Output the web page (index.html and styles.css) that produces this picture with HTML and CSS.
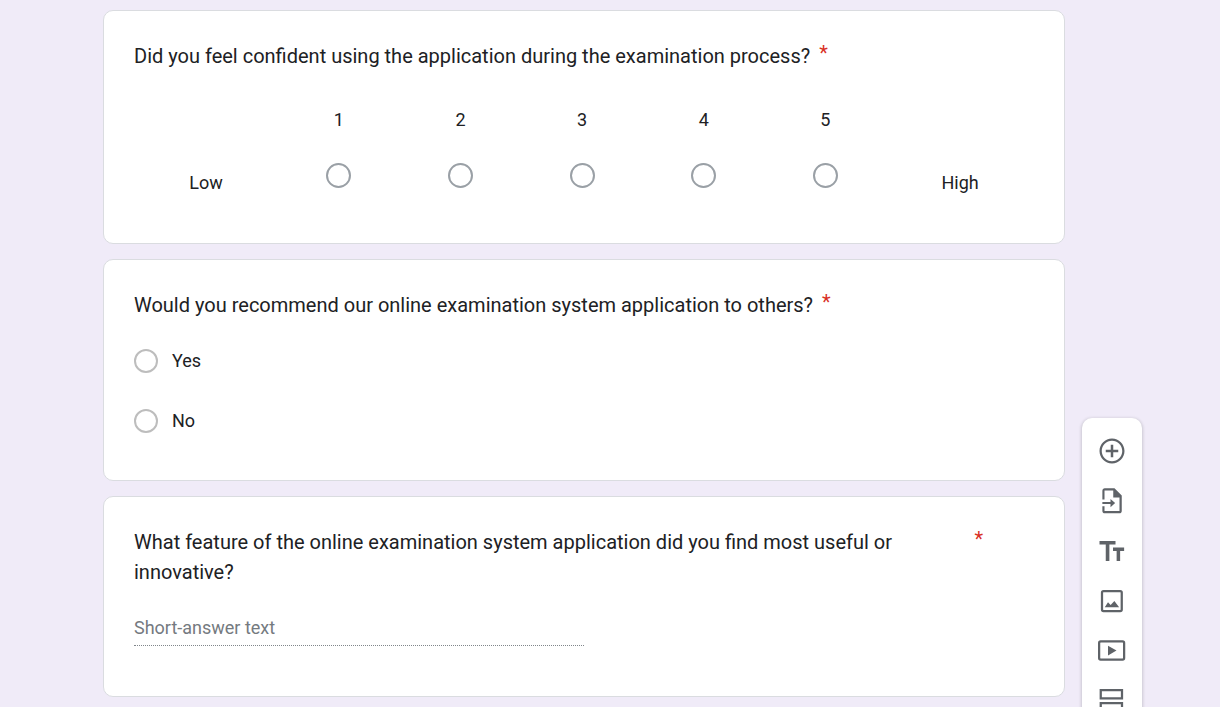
FILE: index.html
```html
<!DOCTYPE html>
<html lang="en">
<head>
<meta charset="utf-8">
<meta name="viewport" content="width=device-width, initial-scale=1">
<title>Online examination system survey</title>
<link rel="stylesheet" href="styles.css">
</head>
<body>
<div class="page">
  <main class="form">
    <section class="card" aria-labelledby="q1">
      <div class="question">
        <h2 class="question-title" id="q1">Did you feel confident using the application during the examination process?</h2>
        <span class="required">*</span>
      </div>
      <div class="scale" role="radiogroup" aria-labelledby="q1">
        <span class="scale-end">Low</span>
        <label class="scale-step"><span class="scale-number">1</span><span class="scale-mark"><input class="radio radio-scale" type="radio" name="confidence" value="1"></span></label>
        <label class="scale-step"><span class="scale-number">2</span><span class="scale-mark"><input class="radio radio-scale" type="radio" name="confidence" value="2"></span></label>
        <label class="scale-step"><span class="scale-number">3</span><span class="scale-mark"><input class="radio radio-scale" type="radio" name="confidence" value="3"></span></label>
        <label class="scale-step"><span class="scale-number">4</span><span class="scale-mark"><input class="radio radio-scale" type="radio" name="confidence" value="4"></span></label>
        <label class="scale-step"><span class="scale-number">5</span><span class="scale-mark"><input class="radio radio-scale" type="radio" name="confidence" value="5"></span></label>
        <span class="scale-end">High</span>
      </div>
    </section>

    <section class="card" aria-labelledby="q2">
      <div class="question">
        <h2 class="question-title" id="q2">Would you recommend our online examination system application to others?</h2>
        <span class="required">*</span>
      </div>
      <div class="options" role="radiogroup" aria-labelledby="q2">
        <label class="option"><input class="radio" type="radio" name="recommend" value="yes"><span>Yes</span></label>
        <label class="option"><input class="radio" type="radio" name="recommend" value="no"><span>No</span></label>
      </div>
    </section>

    <section class="card" aria-labelledby="q3">
      <div class="question">
        <h2 class="question-title" id="q3">What feature of the online examination system application did you find most useful or innovative?</h2>
        <span class="required">*</span>
      </div>
      <input class="short-answer" type="text" placeholder="Short-answer text" aria-labelledby="q3">
    </section>
  </main>

  <div class="toolbar" role="toolbar" aria-label="Add to form">
    <button class="tool" type="button" aria-label="Add question">
      <svg class="icon" viewBox="0 0 24 24"><path d="M13 7h-2v4H7v2h4v4h2v-4h4v-2h-4V7zm-1-5C6.480 2 2 6.480 2 12s4.480 10 10 10 10-4.480 10-10S17.520 2 12 2zm0 18.200c-4.500 0-8.200-3.700-8.200-8.200S7.500 3.800 12 3.800s8.200 3.700 8.200 8.200-3.700 8.200-8.200 8.200z"/></svg>
    </button>
    <button class="tool" type="button" aria-label="Import questions">
      <svg class="icon" viewBox="0 0 24 24"><path d="M14 1.700H6.200c-1.100 0-1.900.9-1.900 2v7H6V3.500h7v5.700h5v10.700H6v-3.700H4.300v3.700c0 1.100.8 1.900 1.900 1.900h11.700c1.100 0 1.900-.8 1.900-1.900V7.600L14 1.700z"/><path d="M4.300 12.800h6.500v-2.500l3.700 3.300-3.700 3.300v-2.500H4.300z"/></svg>
    </button>
    <button class="tool" type="button" aria-label="Add title and description">
      <svg class="icon" viewBox="0 0 24 24"><path d="M2 4h12.800v2.800H9.900V20H7V6.800H2zM12.800 9.200h8.900v2.700h-3.200V20h-2.800v-8.100h-2.900z"/></svg>
    </button>
    <button class="tool" type="button" aria-label="Add image">
      <svg class="icon" viewBox="0 0 24 24"><rect class="outline" x="4" y="4" width="15.800" height="16" rx="1.200"/><path d="M6.200 16.900l2.600-4 2.100 2.300 3-3.300 3.800 5z"/></svg>
    </button>
    <button class="tool" type="button" aria-label="Add video">
      <svg class="icon" viewBox="0 0 24 24"><rect class="outline" x="1.700" y="4.300" width="20" height="14.500" rx="1.200"/><path d="M8.800 7.700v7.800l6.800-3.900z"/></svg>
    </button>
    <button class="tool" type="button" aria-label="Add section">
      <svg class="icon" viewBox="0 0 24 24"><path class="outline" d="M3 3.200h17v6.600H3zM3 13.700h17v6.600H3z"/></svg>
    </button>
  </div>
</div>
</body>
</html>
```
FILE: styles.css
```css
* {
  box-sizing: border-box;
}

body {
  margin: 0;
  background: #f0ebf8;
  color: #202124;
  font: 18px/24px Roboto, Arial, sans-serif;
}

.page {
  display: flex;
  gap: 17px;
  height: 100vh;
  padding: 10px 78px 0 103px;
  overflow: hidden;
}

.form {
  display: flex;
  flex: 1;
  flex-direction: column;
  gap: 15px;
}

.card {
  padding: 30px;
  border: 1px solid #dadce0;
  border-radius: 10px;
  background: #fff;
}

.question {
  display: flex;
  gap: 9px;
  margin-right: 51px;
}

.question-title {
  margin: 0;
  font-size: 20px;
  font-weight: 400;
  line-height: 30px;
}

.required {
  color: #d93025;
  font-size: 20px;
  line-height: 24px;
}

/* Linear scale */
.scale {
  display: flex;
  padding-top: 24px;
}

.scale-end {
  display: flex;
  flex: 1 1 auto;
  align-items: center;
  align-self: flex-end;
  justify-content: center;
  height: 60px;
  padding: 0 7px;
}

.scale-step {
  display: flex;
  flex: 1 1 auto;
  flex-direction: column;
  padding-bottom: 7px;
}

.scale-number,
.scale-mark {
  display: flex;
  align-items: center;
  justify-content: center;
  height: 50px;
}

.scale-mark {
  height: 61px;
}

/* Choices */
.radio {
  width: 24px;
  height: 24px;
  margin: 0;
  border: 2px solid #bdbdbd;
  border-radius: 50%;
  appearance: none;
}

.radio:checked {
  background: #673ab7 content-box;
  padding: 4px;
}

.radio-scale {
  width: 25px;
  height: 25px;
  border-color: #9aa0a6;
}

.options {
  display: flex;
  flex-direction: column;
  gap: 36px;
  padding: 29px 0 17px;
}

.option {
  display: flex;
  gap: 14px;
  align-items: center;
}

.short-answer {
  display: block;
  width: 50%;
  height: 36px;
  margin: 23px 0 20px;
  padding: 0;
  border: 0;
  border-bottom: 1px dotted #80868b;
  background: none;
  color: inherit;
  font: inherit;
}

.short-answer::placeholder {
  color: #757a7f;
  opacity: 1;
}

/* Floating toolbar */
.toolbar {
  align-self: flex-start;
  width: 60px;
  margin-top: 408px;
  padding: 8px 0;
  border-radius: 10px;
  background: #fff;
  box-shadow: 0 1px 3px 1px rgba(60, 64, 67, 0.2);
}

.tool {
  display: flex;
  align-items: center;
  justify-content: center;
  width: 100%;
  height: 50px;
  padding: 0;
  border: 0;
  background: none;
  color: #5f6368;
}

.icon {
  width: 30px;
  height: 30px;
  fill: currentColor;
}

.outline {
  fill: none;
  stroke: currentColor;
  stroke-width: 1.8;
}
```
